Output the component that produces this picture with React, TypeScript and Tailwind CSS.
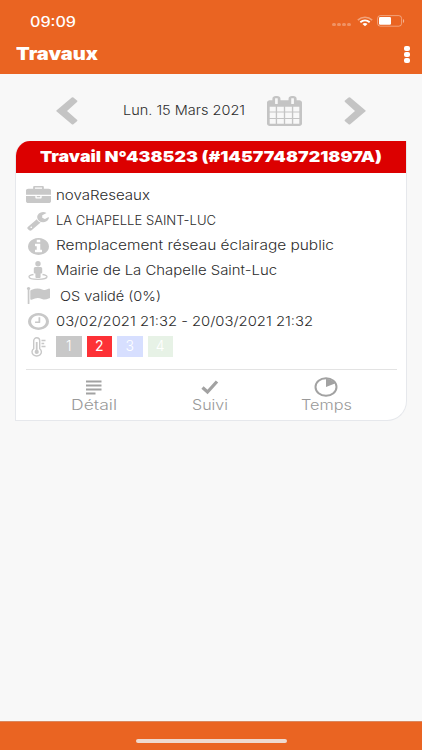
import { useLayoutEffect, useRef, useState } from 'react';
import type { ReactNode } from 'react';

// Renders a single line of text widened to a given width.
function Wide({ w, children, className = '' }: { w: number; children: string; className?: string }) {
  const ref = useRef<HTMLSpanElement>(null);
  const [scale, setScale] = useState(1);
  useLayoutEffect(() => {
    if (ref.current && ref.current.offsetWidth) setScale(w / ref.current.getBoundingClientRect().width);
  }, []);
  return (
    <span className={`block whitespace-nowrap ${className}`} style={{ width: w }}>
      <span ref={ref} className="inline-block origin-left" style={{ transform: `scaleX(${scale})` }}>
        {children}
      </span>
    </span>
  );
}

function Glyph({ d, box, className }: { d: string; box: string; className: string }) {
  return (
    <svg viewBox={box} preserveAspectRatio="none" className={className} fill="currentColor">
      <path d={d} />
    </svg>
  );
}

const CHEVRON =
  'M.7 13.300L15.800.5q.8-.6 1.600 0l3.600 3q.8.700 0 1.400L11 13.900l10 8.900q.8.700 0 1.400l-3.600 3q-.8.600-1.600 0L.7 14.600q-.8-.7 0-1.300z';
const BRIEFCASE =
  'M640 256h512v-128h-512v128zm1152 640v480q0 66-47 113t-113 47h-1472q-66 0-113-47t-47-113v-480h672v160q0 26 19 45t45 19h320q26 0 45-19t19-45v-160h672zm-768 0v128h-256v-128h256zm768-480v384h-1792v-384q0-66 47-113t113-47h352v-160q0-40 28-68t68-28h576q40 0 68 28t28 68v160h352q66 0 113 47t47 113z';
const WRENCH =
  'M448 1472q0-26-19-45t-45-19-45 19-19 45 19 45 45 19 45-19 19-45zm644-420l-682 682q-37 37-90 37-52 0-91-37l-106-108q-38-36-38-90 0-53 38-91l681-681q39 98 114.5 173.5t173.5 114.5zm634-435q0 39-23 106-47 134-164.5 217.5t-258.5 83.5q-185 0-316.5-131.5t-131.5-316.5 131.5-316.5 316.5-131.5q58 0 121.5 16.5t107.5 46.5q16 11 16 28t-16 28l-293 169v224l193 107q5-3 79-48.5t135.5-81 70.5-35.5q15 0 23.5 10t8.5 25z';
const INFO =
  'M1152 1376v-160q0-14-9-23t-23-9h-96v-512q0-14-9-23t-23-9h-320q-14 0-23 9t-9 23v160q0 14 9 23t23 9h96v320h-96q-14 0-23 9t-9 23v160q0 14 9 23t23 9h448q14 0 23-9t9-23zm-128-896v-160q0-14-9-23t-23-9h-192q-14 0-23 9t-9 23v160q0 14 9 23t23 9h192q14 0 23-9t9-23zm640 416q0 209-103 385.5t-279.5 279.5-385.5 103-385.5-103-279.5-279.5-103-385.5 103-385.5 279.5-279.5 385.5-103 385.5 103 279.5 279.5 103 385.5z';
const FLAG =
  'M320 256q0 72-64 110v1266q0 13-9.5 22.5t-22.5 9.5h-64q-13 0-22.5-9.5t-9.5-22.5v-1266q-64-38-64-110 0-53 37.5-90.5t90.5-37.5 90.5 37.5 37.5 90.5zm1472 64v763q0 25-12.5 38.5t-39.5 27.5q-215 116-369 116-61 0-123.5-22t-108.5-48-115.5-48-142.5-22q-192 0-464 146-17 9-33 9-26 0-45-19t-19-45v-742q0-32 31-55 21-14 79-43 236-120 421-120 107 0 200 29t219 88q38 19 88 19 54 0 117.5-21t110-47 88-47 54.5-21q26 0 45 19t19 45z';
const CLOCK =
  'M1024 544v448q0 14-9 23t-23 9h-320q-14 0-23-9t-9-23v-64q0-14 9-23t23-9h224v-352q0-14 9-23t23-9h64q14 0 23 9t9 23zm416 352q0-148-73-273t-198-198-273-73-273 73-198 198-73 273 73 273 198 198 273 73 273-73 198-198 73-273zm224 0q0 209-103 385.5t-279.5 279.5-385.5 103-385.5-103-279.5-279.5-103-385.5 103-385.5 279.5-279.5 385.5-103 385.5 103 279.5 279.5 103 385.5z';
const CALENDAR =
  'M192 1664h288v-288h-288v288zm352 0h320v-288h-320v288zm-352-352h288v-320h-288v320zm352 0h320v-320h-320v320zm-352-384h288v-288h-288v288zm736 736h320v-288h-320v288zm-384-736h320v-288h-320v288zm768 736h288v-288h-288v288zm-384-352h320v-320h-320v320zm-352-864v-288q0-13-9.5-22.5t-22.5-9.5h-64q-13 0-22.5 9.5t-9.5 22.5v288q0 13 9.5 22.5t22.5 9.5h64q13 0 22.5-9.5t9.5-22.5zm736 864h288v-320h-288v320zm-384-384h320v-288h-320v288zm384 0h288v-288h-288v288zm32-480v-288q0-13-9.5-22.5t-22.5-9.5h-64q-13 0-22.5 9.5t-9.5 22.5v288q0 13 9.5 22.5t22.5 9.5h64q13 0 22.5-9.5t9.5-22.5zm384-64v1280q0 52-38 90t-90 38h-1408q-52 0-90-38t-38-90v-1280q0-52 38-90t90-38h128v-96q0-66 47-113t113-47h64q66 0 113 47t47 113v96h384v-96q0-66 47-113t113-47h64q66 0 113 47t47 113v96h128q52 0 90 38t38 90z';

function StreetView() {
  return (
    <svg viewBox="0 0 20 19" className="h-[19px] w-5" fill="currentColor">
      <circle cx="10" cy="2.8" r="2.7" />
      <path d="M7.3 6h5.4a1.5 1.5 0 0 1 1.5 1.5v4a1 1 0 0 1-1 1h-.6V16a1 1 0 0 1-1 1H8.4a1 1 0 0 1-1-1v-3.5h-.6a1 1 0 0 1-1-1v-4A1.500 1.500 0 0 1 7.300 6z" />
      <path d="M5.500 13.500C2.500 14 1 14.700 1 15.700c0 1.500 4 2.600 9 2.600s9-1.100 9-2.600c0-1-1.500-1.700-4.500-2.200" fill="none" stroke="currentColor" strokeWidth="1.300" />
    </svg>
  );
}

function Thermometer() {
  return (
    <svg viewBox="0 0 17 20" className="h-5 w-[17px]" fill="none" stroke="currentColor" strokeWidth="1.400">
      <path d="M3.700 11.700V3.800a3 3 0 0 1 6 0v7.900a4.700 4.100 0 1 1-6 0z" />
      <path d="M6.700 5v9" strokeWidth="1.800" />
      <circle cx="6.700" cy="14.900" r="2.100" fill="currentColor" stroke="none" />
      <path d="M11.500 3.500h4M11.500 6.500h2.700M11.500 9.500h4" strokeWidth="1.300" />
    </svg>
  );
}

function Row({ icon, children }: { icon: ReactNode; children: ReactNode }) {
  return (
    <div className="flex h-[25.200px] items-center">
      <div className="flex w-[26px] shrink-0 justify-center text-[#c8c8c8]">{icon}</div>
      <div className="ml-[5px] flex pt-[2px]">{children}</div>
    </div>
  );
}

function Action({ icon, label, w }: { icon: ReactNode; label: string; w: number }) {
  return (
    <div className="flex w-[116px] flex-col items-center text-[#a2a2a2]">
      <div className="flex h-5 items-center">{icon}</div>
      <Wide w={w} className="text-[14px] leading-[15px] font-light text-[#999]">{label}</Wide>
    </div>
  );
}

export default function App() {
  return (
    <div className="flex h-[750px] w-[422px] flex-col overflow-hidden bg-[#f8f8f8] font-['Inter','Liberation_Sans',sans-serif] text-[#2c2c2c]">
      <header className="h-[74px] bg-[#ea6422] text-white">
        <div className="flex h-[42px] items-center pl-[30px] pr-[17px]">
          <Wide w={46} className="text-[14px] font-medium">09:09</Wide>
          <div className="ml-auto flex items-center">
            <div className="mr-[6px] flex gap-[1px] pt-[6px]">
              {[0, 1, 2, 3].map((i) => (
                <span key={i} className="h-[3px] w-[4px] rounded-full bg-white/30" />
              ))}
            </div>
            <svg viewBox="0 0 16 11" className="h-[11px] w-4" fill="none" stroke="white">
              <path d="M.8 4.100c4-3.800 10.400-3.800 14.400 0" strokeWidth="1.500" opacity=".4" />
              <path d="M3.300 6.300c2.800-2.400 6.600-2.400 9.400 0" strokeWidth="1.900" />
              <path d="M8 10.300L5.500 8c1.500-1.200 3.500-1.200 5 0z" fill="white" stroke="none" />
            </svg>
            <svg viewBox="0 0 28 12" className="ml-[4px] h-3 w-7" fill="white">
              <rect x=".6" y=".6" width="24" height="10.600" rx="2.800" fill="none" stroke="white" strokeOpacity=".4" />
              <rect x="2" y="2" width="12" height="7.800" rx="1.200" />
              <path d="M26 4c1.600.6 1.600 3.400 0 4z" opacity=".5" />
            </svg>
          </div>
        </div>
        <div className="flex h-6 items-center justify-between pl-4 pr-[12px]">
          <Wide w={82} className="pt-[2px] text-[17px] font-black">Travaux</Wide>
          <div className="flex flex-col gap-[1px]">
            <span className="h-[5px] w-[6px] rounded-[2px] bg-white" />
            <span className="h-[5px] w-[6px] rounded-[2px] bg-white" />
            <span className="h-[5px] w-[6px] rounded-[2px] bg-white" />
          </div>
        </div>
      </header>

      <main className="flex-1">
        <nav className="flex h-[67px] items-center pt-[6px] pl-14 text-[#c4c4c4]">
          <svg viewBox="0 0 22 28" className="h-7 w-[22px]" fill="currentColor">
            <path d={CHEVRON} />
          </svg>
          <Wide w={122} className="ml-[45px] text-[13px] font-light text-[#2c2c2c]">Lun. 15 Mars 2021</Wide>
          <Glyph d={CALENDAR} box="64 0 1664 1792" className="ml-[22px] h-[30px] w-[35px]" />
          <svg viewBox="0 0 22 28" className="ml-[42px] h-7 w-[22px] -scale-x-100" fill="currentColor">
            <path d={CHEVRON} />
          </svg>
        </nav>

        <section className="ml-[15px] h-[280px] w-[392px] overflow-hidden rounded-tl-[15px] rounded-br-[20px] border border-t-0 border-[#e6e8ec] bg-white">
          <h1 className="flex h-8 items-center bg-[#dc0000] pt-px pl-6 text-white">
            <Wide w={342} className="text-[15px] font-black">Travail N°438523 (#1457748721897A)</Wide>
          </h1>
          <div className="pt-[9px] pl-[9px] text-[13px] font-light">
            <Row icon={<Glyph d={BRIEFCASE} box="0 0 1792 1536" className="h-[17px] w-[25px]" />}>
              <Wide w={94}>novaReseaux</Wide>
            </Row>
            <Row icon={<Glyph d={WRENCH} box="64 128 1664 1664" className="mt-[3px] h-[19px] w-[22px]" />}>
              <Wide w={160}>LA CHAPELLE SAINT-LUC</Wide>
            </Row>
            <Row icon={<Glyph d={INFO} box="128 128 1536 1536" className="mt-[3px] h-[17px] w-[21px]" />}>
              <Wide w={278}>Remplacement réseau éclairage public</Wide>
            </Row>
            <Row icon={<div className="pt-px"><StreetView /></div>}>
              <Wide w={221}>Mairie de La Chapelle Saint-Luc</Wide>
            </Row>
            <Row icon={<Glyph d={FLAG} box="0 128 1792 1536" className="h-[17px] w-6" />}>
              <Wide w={101} className="ml-1">OS validé (0%)</Wide>
            </Row>
            <Row icon={<Glyph d={CLOCK} box="128 128 1536 1536" className="mt-[2px] h-[17px] w-[21px]" />}>
              <Wide w={257}>03/02/2021 21:32 - 20/03/2021 21:32</Wide>
            </Row>
            <Row icon={<div className="pt-[2px]"><Thermometer /></div>}>
              <div className="flex gap-[5px] text-center text-[14px] leading-[19px] text-white">
                <span className="h-[21px] w-[25.500px] bg-[#c8c8c8]">1</span>
                <span className="h-[21px] w-[25.500px] bg-[#fd3136] font-normal">2</span>
                <span className="h-[21px] w-[25.500px] bg-[#d7dfff]">3</span>
                <span className="h-[21px] w-[25.500px] bg-[#e7f2e6]">4</span>
              </div>
            </Row>
          </div>
          <div className="mt-[11px] ml-[10px] flex w-[371px] border-t border-[#e3e3e3] pt-[7px] pl-[10px]">
            <Action
              label="Détail"
              w={46}
              icon={
                <svg viewBox="0 0 16 15" className="h-[15px] w-4" stroke="currentColor" strokeWidth="2">
                  <path d="M0 1.500h15.500M0 5.500h15.500M0 9.500h15.500M0 13.500h9.500" />
                </svg>
              }
            />
            <Action
              label="Suivi"
              w={36}
              icon={
                <svg viewBox="0 0 18 15" className="h-[15px] w-[18px]" fill="none" stroke="currentColor" strokeWidth="3.300">
                  <path d="M1.500 7.500l5 4.500L16 1.500" />
                </svg>
              }
            />
            <Action
              label="Temps"
              w={51}
              icon={
                <svg viewBox="0 0 24 20" className="h-5 w-6" fill="none" stroke="currentColor" strokeWidth="2">
                  <ellipse cx="12" cy="10" rx="10.500" ry="8.700" />
                  <path d="M12 10V2q6 0 9 4.500z" fill="currentColor" stroke="none" />
                </svg>
              }
            />
          </div>
        </section>
      </main>

      <footer className="flex h-[29px] justify-center border-t border-[#d98760] bg-[#ea6422] pt-[17px]">
        <span className="h-[4px] w-[151px] rounded-full bg-[#eed9cf]" />
      </footer>
    </div>
  );
}
